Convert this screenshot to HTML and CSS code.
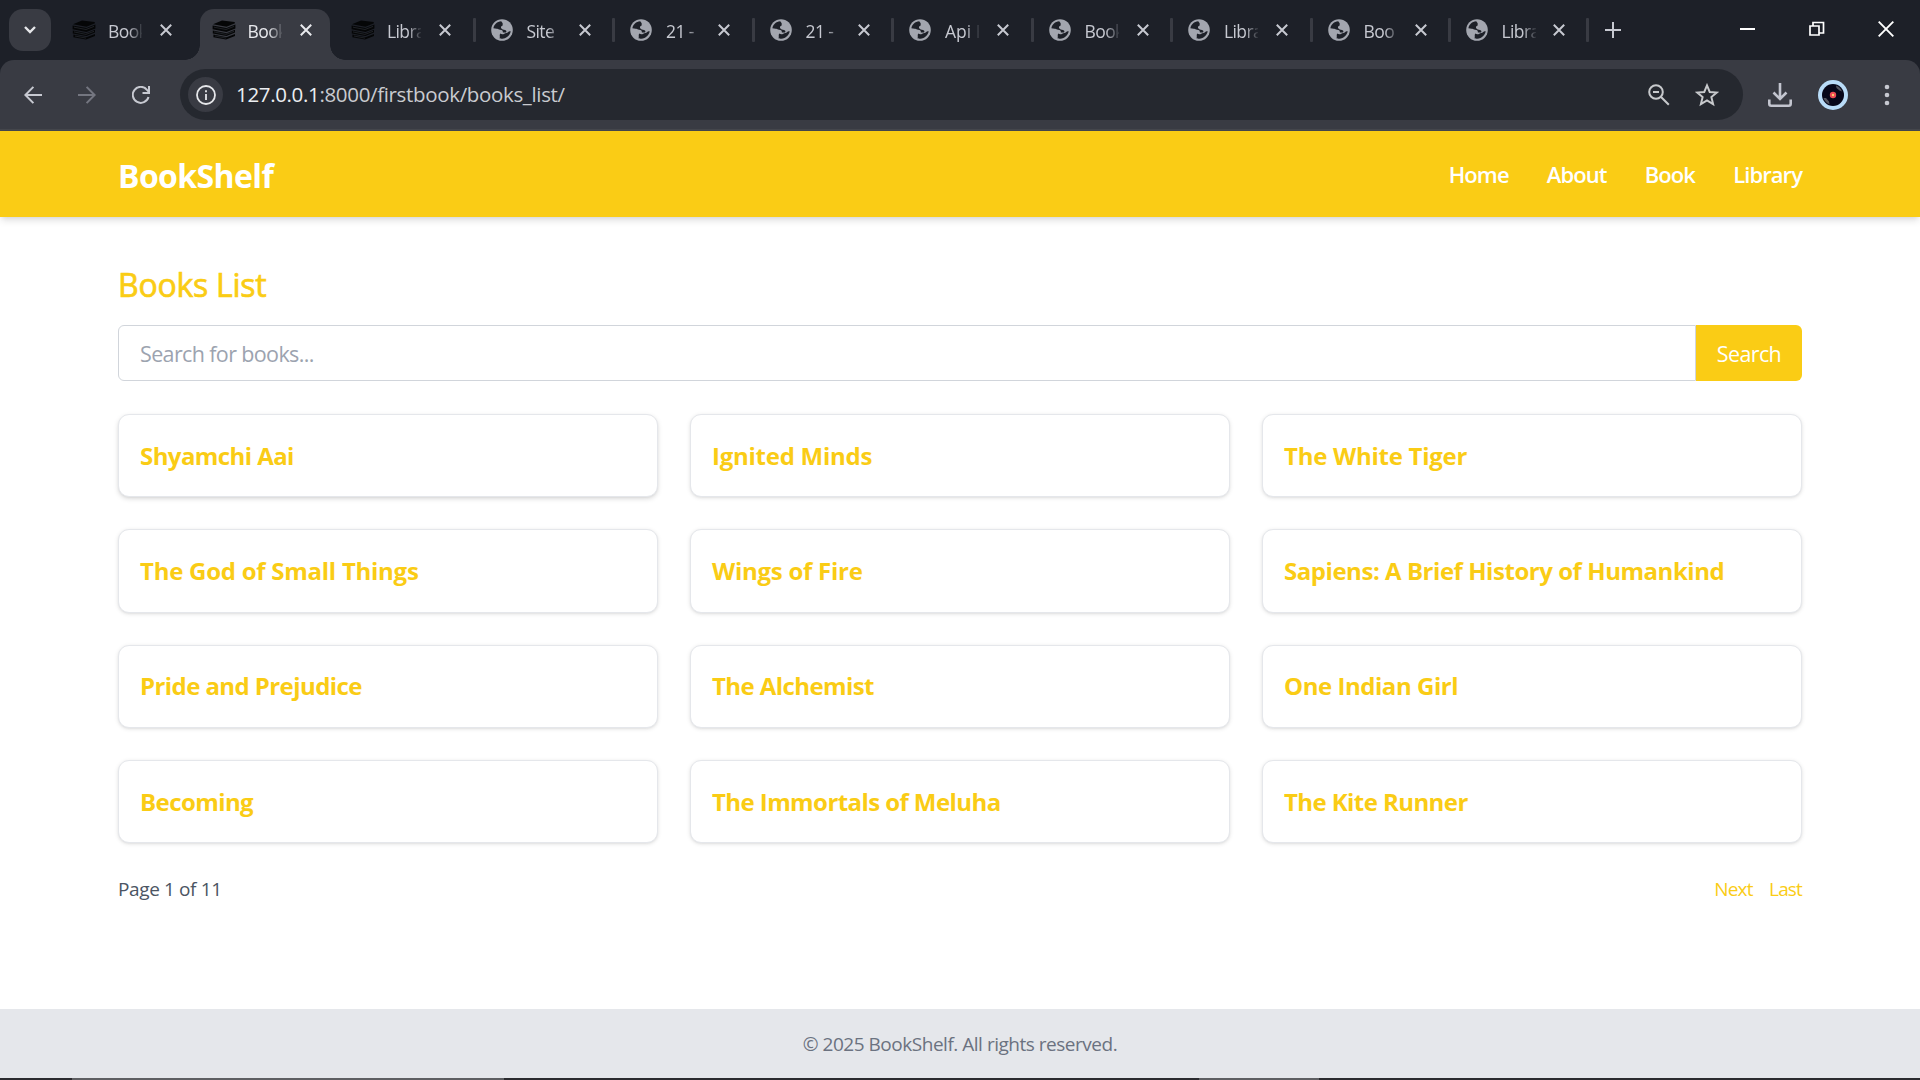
FILE: index.html
```html
<!DOCTYPE html>
<html lang="en">
<head>
<meta charset="utf-8">
<title>BookShelf</title>
<link rel="stylesheet" href="styles.css">
</head>
<body>
<svg class="defs" width="0" height="0" aria-hidden="true">
  <symbol id="books" viewBox="0 0 24 20">
    <path d="M1 4.2 10 .6 22.600 2 23 3.200 14.500 6.800z M.6 5.600 14.500 8 23.400 4.600V8.400L14.500 12 .6 9.200z M.8 10.600 14.500 13.200 23 9.800V12.600L14.500 16 .8 13.600z M1.400 14.600 14.500 17.200 23 14V16L14 19.600 1.400 17.200z" fill="#050607"/>
    <path d="M2 7.200 14 9.500 22 6.400M2 11.900 14 14.400 22 11.300M3 16 14 18.100" fill="none" stroke="#30343b" stroke-width=".6"/>
  </symbol>
  <symbol id="globe" viewBox="0 0 22 22">
    <circle cx="11" cy="11" r="10.800" fill="#a3a6af"/>
    <path d="M10.200 2.300C6 2.600 3.100 5.400 2.400 9.300c1.400.3 2.300.6 3.600.5 1.200-.2 1.500.9 3 1 1.800 0 3 .7 2.900 2.600l2 .2c1.500 0 1.900-1.200 1.100-2.100-1.200-1-3-.4-4.300-1.700-1.200-1-.9-2.500.6-3 1-.4 0-1.600.4-2.500z" fill="#1d2028"/>
    <path d="M9.300 14.500c1.200 1 2.700 1 4 .2 1.200-.9 2.800-.6 3.900-1.800.9-1 1.600-.8 2.500-.6-.7 3.900-3.900 7.200-8.300 7.400-1.400 0-2.200-.2-2.900-.5.9-1.500-.5-3 .8-4.700z" fill="#1d2028"/>
  </symbol>
  <symbol id="close" viewBox="0 0 12 12"><path d="M.8.8 11.200 11.200M11.200.8.8 11.200" fill="none" stroke="currentColor" stroke-width="2"/></symbol>
</svg>

<div class="browser">
  <div class="tabstrip">
    <div class="tab-search"><svg width="12" height="8" viewBox="0 0 12 8"><path d="M1 1l5 5 5-5" fill="none" stroke="#e6e7ea" stroke-width="2.400"/></svg></div>
    <div class="tab first"><svg class="fav books"><use href="#books"/></svg><span class="label">Book</span><svg class="x"><use href="#close"/></svg></div>
    <div class="tab active"><svg class="fav books"><use href="#books"/></svg><span class="label">Book</span><svg class="x"><use href="#close"/></svg></div>
    <div class="tab sep"><svg class="fav books"><use href="#books"/></svg><span class="label">Libra</span><svg class="x"><use href="#close"/></svg></div>
    <div class="tab sep"><svg class="fav"><use href="#globe"/></svg><span class="label">Site</span><svg class="x"><use href="#close"/></svg></div>
    <div class="tab sep"><svg class="fav"><use href="#globe"/></svg><span class="label">21 -</span><svg class="x"><use href="#close"/></svg></div>
    <div class="tab sep"><svg class="fav"><use href="#globe"/></svg><span class="label">21 -</span><svg class="x"><use href="#close"/></svg></div>
    <div class="tab sep"><svg class="fav"><use href="#globe"/></svg><span class="label api">Api R</span><svg class="x"><use href="#close"/></svg></div>
    <div class="tab sep"><svg class="fav"><use href="#globe"/></svg><span class="label">Book</span><svg class="x"><use href="#close"/></svg></div>
    <div class="tab sep"><svg class="fav"><use href="#globe"/></svg><span class="label">Libra</span><svg class="x"><use href="#close"/></svg></div>
    <div class="tab sep narrow"><svg class="fav"><use href="#globe"/></svg><span class="label">Boo</span><svg class="x"><use href="#close"/></svg></div>
    <div class="tab sep narrow"><svg class="fav"><use href="#globe"/></svg><span class="label">Libra</span><svg class="x"><use href="#close"/></svg></div>
    <svg class="new-tab" width="16" height="16" viewBox="0 0 16 16"><path d="M8 0v16M0 8h16" stroke="#c7c9d1" stroke-width="2"/></svg>
    <div class="window-controls">
      <svg width="16" height="16" viewBox="0 0 16 16"><path d="M0 8h15" stroke="#fff" stroke-width="2"/></svg>
      <svg width="16" height="16" viewBox="0 0 16 16"><path d="M1 5h9v9H1zM4 5V1.500h10.500V12H10" fill="none" stroke="#fff" stroke-width="1.700"/></svg>
      <svg width="16" height="16" viewBox="0 0 16 16"><path d="M.7.700 15.300 15.300M15.300.700.700 15.300" stroke="#fff" stroke-width="1.900"/></svg>
    </div>
  </div>

  <div class="toolbar">
    <svg class="nav-icon" width="18" height="18" viewBox="0 0 18 18"><path d="M18 9H1.500M9.400.900 1.400 9l8 8.100" fill="none" stroke="#c7c9d1" stroke-width="2"/></svg>
    <svg class="nav-icon" width="18" height="18" viewBox="0 0 18 18"><path d="M0 9h16.500M8.600.900l8 8.100-8 8.100" fill="none" stroke="#747680" stroke-width="2"/></svg>
    <svg class="nav-icon" width="18" height="18" viewBox="0 0 18 18"><path d="M16.500 11A8 8 0 1 1 15 3.800L17 6M17 0v7h-6.500" fill="none" stroke="#c7c9d1" stroke-width="2"/></svg>
    <div class="omnibox">
      <div class="site-info"><svg width="20" height="20" viewBox="0 0 20 20"><circle cx="10" cy="10" r="9" fill="none" stroke="#e6e7ea" stroke-width="1.800"/><path d="M10 9v6M10 5.200v2" stroke="#e6e7ea" stroke-width="1.800"/></svg></div>
      <div class="url"><span class="host">127.0.0.1</span>:8000/firstbook/books_list/</div>
      <svg class="zoom-icon" width="22" height="22" viewBox="0 0 22 22"><circle cx="8" cy="8" r="6.800" fill="none" stroke="#c7c9cc" stroke-width="2"/><path d="M5 8h6M12.800 12.800l8 8" stroke="#c7c9cc" stroke-width="2"/></svg>
      <svg width="24" height="24" viewBox="0 0 22 22"><path d="M11 2.200l2.500 6 6.500.5-5 4.200 1.600 6.400L11 15.900l-5.600 3.400L7 12.900 2 8.700l6.500-.5z" fill="none" stroke="#c7c9cc" stroke-width="1.800"/></svg>
    </div>
    <svg class="download" width="24" height="24" viewBox="0 0 24 24"><path d="M12 0v15M5.500 9.500 12 16l6.500-6.500" fill="none" stroke="#c3c5cf" stroke-width="2.600"/><path d="M1.300 16.500v4.200q0 2 2 2h17.400q2 0 2-2v-4.200" fill="none" stroke="#c3c5cf" stroke-width="2.600"/></svg>
    <svg class="avatar" width="30" height="30" viewBox="0 0 30 30"><circle cx="15" cy="15" r="15" fill="#b9dcf8"/><circle cx="15" cy="15" r="11" fill="#070719"/><path d="M18 5.500a10 10 0 0 1 6 6l-2.500-1-3-2.500zM5.500 18a10 10 0 0 0 6 6.200L11 21.500 8 18z" fill="#55565f"/><circle cx="15" cy="15" r="3.200" fill="#ee4a55"/><circle cx="15" cy="15" r="1.200" fill="#ffc76b"/></svg>
    <svg class="menu" width="6" height="22" viewBox="0 0 6 22"><g fill="#c7c9d1"><circle cx="3" cy="3" r="2.300"/><circle cx="3" cy="11" r="2.300"/><circle cx="3" cy="19" r="2.300"/></g></svg>
  </div>
</div>

<header class="site-header">
  <div class="brand">BookShelf</div>
  <nav class="site-nav"><a>Home</a><a>About</a><a>Book</a><a>Library</a></nav>
</header>

<main class="content">
  <h1 class="title">Books List</h1>
  <form class="search">
    <div class="search-input">Search for books...</div>
    <div class="search-button"><span>Search</span></div>
  </form>
  <div class="books">
    <div class="book hovered">Shyamchi Aai</div>
    <div class="book loose">Ignited Minds</div>
    <div class="book loose">The White Tiger</div>
    <div class="book loose">The God of Small Things</div>
    <div class="book loose">Wings of Fire</div>
    <div class="book medium">Sapiens: A Brief History of Humankind</div>
    <div class="book">Pride and Prejudice</div>
    <div class="book">The Alchemist</div>
    <div class="book medium">One Indian Girl</div>
    <div class="book">Becoming</div>
    <div class="book">The Immortals of Meluha</div>
    <div class="book">The Kite Runner</div>
  </div>
  <div class="pagination">
    <span class="page-count">Page 1 of 11</span>
    <div class="page-links"><a>Next</a><a>Last</a></div>
  </div>
</main>

<footer class="site-footer">© 2025 BookShelf. All rights reserved.</footer>
<div class="taskbar"><i class="open-apps"></i><i class="tray"></i></div>
</body>
</html>
```
FILE: styles.css
```css
* { box-sizing: border-box; }
body {
  margin: 0;
  width: 1920px;
  height: 1080px;
  overflow: hidden;
  display: flex;
  flex-direction: column;
  background: #fff;
  font-family: "Open Sans", "Noto Sans", sans-serif;
}
.defs { position: absolute; }
svg { display: block; flex: none; }

/* Browser window */
.browser { height: 131px; flex: none; background: #1d2028; }
.tabstrip { height: 60px; display: flex; align-items: flex-start; }
.tab-search {
  width: 42px; height: 42px; margin: 9px 18px 0 9px;
  border-radius: 14px; background: #393b43;
  display: flex; align-items: center; justify-content: center;
}
.tab {
  position: relative;
  width: 139.500px; height: 60px; flex: none;
  display: flex; align-items: center;
  padding: 0 0 0 3px;
  color: #c7c9d1;
}
.tab.narrow { width: 138px; }
.tab .fav { width: 22px; height: 22px; margin: 0 14px 0 0; }
.tab .fav.books { width: 24px; height: 20px; margin: 0 12px 0 0; }
.tab .label {
  width: 34px; overflow: hidden; white-space: pre;
  font-size: 17.500px; line-height: 24px; letter-spacing: -.6px;
  padding-top: 2px;
  -webkit-mask-image: linear-gradient(90deg, #000 60%, transparent 105%);
  mask-image: linear-gradient(90deg, #000 60%, transparent 105%);
}
.tab .label.api { letter-spacing: 0; }
.tab .x { width: 12px; height: 12px; margin-left: 18px; }
.tab.narrow .x { margin-left: 17px; }
.tab.sep::after {
  content: ""; position: absolute; right: 12px; top: 18px;
  width: 3px; height: 24px; background: #393b43; border-radius: 1px;
}
.tab.active { color: #e9eaee; }
.tab.active::before {
  content: ""; position: absolute; z-index: 0; left: -8.500px; top: 9px;
  width: 130px; height: 51px; background: #393b43; border-radius: 14px 14px 0 0;
}
.tab.active > * { position: relative; z-index: 1; }
.tab.active::after {
  content: ""; position: absolute; left: -23.500px; bottom: 0;
  width: 160px; height: 15px;
  background:
    radial-gradient(circle at 0 0, transparent 14.500px, #393b43 15px) left / 15px 15px no-repeat,
    radial-gradient(circle at 100% 0, transparent 14.500px, #393b43 15px) right / 15px 15px no-repeat;
}
.new-tab { margin: 22px 0 0 4px; }
.window-controls { display: flex; gap: 53px; margin: 21px 26px 0 auto; }

.toolbar {
  height: 71px; background: #393b43; border-radius: 14px 14px 0 0;
  border-bottom: 2px solid #44464c;
  display: flex; align-items: center; padding: 0 30px 0 24px;
}
.nav-icon { margin-right: 36px; }
.omnibox {
  width: 1563px; height: 51px; margin-left: -6px; border-radius: 26px;
  background: #25282f; display: flex; align-items: center; padding: 0 24px 0 8px;
}
.site-info {
  width: 35px; height: 35px; border-radius: 50%; background: #393b43;
  display: flex; align-items: center; justify-content: center;
}
.url { flex: 1; margin-left: 13px; padding-bottom: 2px; font-size: 20.500px; letter-spacing: -.34px; color: #c9cbd0; white-space: nowrap; }
.host { color: #eceef1; }
.zoom-icon { margin-right: 25px; }
.download { margin-left: 25px; }
.avatar { margin-left: 26px; }
.menu { margin-left: 36px; }

/* Page */
.site-header {
  height: 86px; flex: none; background: #facc15; color: #fff;
  padding: 0 118px; display: flex; align-items: center; justify-content: space-between;
  box-shadow: 0 5px 7px -1px rgba(0,0,0,.1), 0 2px 5px -2px rgba(0,0,0,.1);
}
.brand { font-size: 32px; font-weight: 700; padding-top: 3px; letter-spacing: -.6px; }
.site-nav { display: flex; gap: 38.200px; font-size: 22px; font-weight: 600; letter-spacing: -.93px; }

.content { flex: 1; padding: 0 118px; }
.title {
  margin: 48px 0 0; font-size: 32px; line-height: 40px; font-weight: 400;
  letter-spacing: -.25px; color: #facc15; -webkit-text-stroke: .7px #facc15;
}
.search { display: flex; height: 56px; margin: 20px 0 33px; font-size: 21.500px; letter-spacing: -.63px; }
.search-input {
  flex: 1; border: 1px solid #d1d5db; border-radius: 6px 0 0 6px;
  padding: 0 21px; display: flex; align-items: center; color: #9ca3af;
}
.search-button {
  width: 106px; background: #facc15; color: #fff; border-radius: 0 6px 6px 0;
  display: flex; align-items: center; justify-content: center;
}
.books { display: grid; grid-template-columns: repeat(3, 1fr); gap: 32px; }
.book {
  height: 83.300px; padding: 0 21px 1px; border: 1px solid #e5e7eb; border-radius: 11px;
  display: flex; align-items: center; background: #fff;
  color: #facc15; font-size: 24px; font-weight: 700; letter-spacing: -.58px; white-space: nowrap;
  box-shadow: 0 1px 4px rgba(0,0,0,.1), 0 1px 3px -1px rgba(0,0,0,.1);
}
.book.medium { letter-spacing: -.46px; }
.book.loose { letter-spacing: -.26px; }
.book.hovered { box-shadow: 0 2px 5px rgba(0,0,0,.13), 0 1px 3px -1px rgba(0,0,0,.1); }
.pagination {
  margin-top: 32px; height: 28px; display: flex; align-items: center;
  justify-content: space-between; font-size: 19px; letter-spacing: -.38px; color: #4b5563;
}
.page-links { display: flex; gap: 16.500px; color: #facc15; letter-spacing: -.85px; }
.site-footer {
  height: 69px; flex: none; background: #e5e7eb; color: #6b7280;
  display: flex; align-items: center; justify-content: center; font-size: 19px; letter-spacing: -.48px;
}
.taskbar { height: 2px; flex: none; background: #2b2b2f; display: flex; }
.open-apps { width: 432px; margin-left: 72px; background: #5e5f62; }
.tray { width: 120px; margin-left: 695px; background: #5e5f62; }
```
